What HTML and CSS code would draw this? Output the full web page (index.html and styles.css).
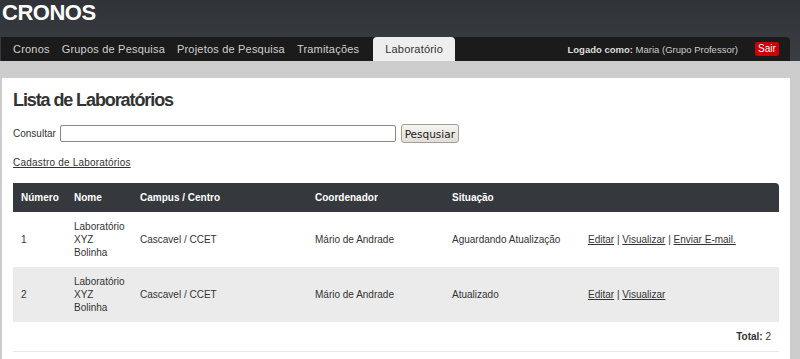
FILE: index.html
```html
<!DOCTYPE html>
<html lang="pt-BR">
<head>
    <meta charset="UTF-8">
    <meta name="viewport" content="width=device-width, initial-scale=1.0">
    <title>Cronos - Lista de Laboratórios</title>
    <link rel="stylesheet" href="styles.css">
</head>
<body>
    <div class="header">
        <h1 class="brand">CRONOS</h1>
        <div class="nav">
            <ul class="menu">
                <li><a href="#">Cronos</a></li>
                <li><a href="#">Grupos de Pesquisa</a></li>
                <li><a href="#">Projetos de Pesquisa</a></li>
                <li><a href="#">Tramitações</a></li>
                <li class="active"><a href="#">Laboratório</a></li>
            </ul>
            <div class="user">
                <span><b>Logado como:</b> Maria (Grupo Professor)</span>
                <a class="logout" href="#">Sair</a>
            </div>
        </div>
    </div>

    <div class="content">
        <h2 class="page-title">Lista de Laboratórios</h2>
        <form class="search">
            <label for="q">Consultar</label>
            <input type="text" id="q" class="search-input">
            <button type="button" class="search-button">Pesqusiar</button>
        </form>
        <a class="new-link" href="#">Cadastro de Laboratórios</a>

        <table class="grid">
            <colgroup>
                <col style="width: 53px">
                <col style="width: 66px">
                <col style="width: 175px">
                <col style="width: 137px">
                <col style="width: 136px">
                <col>
            </colgroup>
            <thead>
                <tr>
                    <th>Número</th>
                    <th>Nome</th>
                    <th>Campus / Centro</th>
                    <th>Coordenador</th>
                    <th>Situação</th>
                    <th></th>
                </tr>
            </thead>
            <tbody>
                <tr>
                    <td>1</td>
                    <td>Laboratório XYZ Bolinha</td>
                    <td>Cascavel / CCET</td>
                    <td>Mário de Andrade</td>
                    <td>Aguardando Atualização</td>
                    <td><a href="#">Editar</a> | <a href="#">Visualizar</a> | <a href="#">Enviar E-mail.</a></td>
                </tr>
                <tr class="alt">
                    <td>2</td>
                    <td>Laboratório XYZ Bolinha</td>
                    <td>Cascavel / CCET</td>
                    <td>Mário de Andrade</td>
                    <td>Atualizado</td>
                    <td><a href="#">Editar</a> | <a href="#">Visualizar</a></td>
                </tr>
            </tbody>
            <tfoot>
                <tr>
                    <td colspan="6" class="total"><b>Total:</b> 2</td>
                </tr>
            </tfoot>
        </table>
    </div>
</body>
</html>
```

FILE: styles.css
```css
body {
    font-family: 'Liberation Sans', Arial, sans-serif;
    font-size: 10px;
    color: #333;
    background-color: #cccccc;
    margin: 0;
    padding: 0;
}
.header {
    background: linear-gradient(#303338, #3a3d42);
    height: 61px;
}
.brand {
    margin: 0;
    padding: 0 0 12px 2px;
    font-size: 22px;
    line-height: 25px;
    letter-spacing: -0.5px;
    color: #fff;
}
.nav {
    margin-left: 1px;
    width: 789px;
    height: 24px;
    background-color: #1b1b1b;
    border-top-right-radius: 4px;
    display: flex;
    justify-content: space-between;
    align-items: stretch;
}
.menu {
    list-style: none;
    margin: 0;
    padding: 0 0 0 6px;
    display: flex;
}
.menu li {
    display: flex;
}
.menu a {
    display: flex;
    align-items: center;
    padding: 0 6px;
    font-size: 11px;
    letter-spacing: 0.2px;
    color: #d0d0d0;
    text-decoration: none;
}
.menu .active {
    margin-left: 8px;
}
.menu .active a {
    padding: 0 12px;
    background-color: #eeeeee;
    color: #333;
    border-radius: 4px 4px 0 0;
}
.user {
    display: flex;
    align-items: center;
    padding-right: 11px;
    font-size: 9.5px;
    color: #ccc;
}
.user b {
    color: #ddd;
}
.logout {
    margin-left: 17px;
    width: 24px;
    height: 14px;
    line-height: 14px;
    text-align: center;
    background-color: #cc0000;
    border-radius: 2px;
    color: #fff;
    font-size: 10px;
    text-decoration: none;
}
.content {
    margin: 17px 0 0 2px;
    width: 766px;
    padding: 11px 11px 20px 11px;
    background-color: #fff;
}
.page-title {
    margin: 0;
    font-size: 18px;
    line-height: 22px;
    letter-spacing: -1.1px;
    color: #333;
}
.search {
    margin: 13px 0 0 0;
    display: flex;
    align-items: center;
    height: 19px;
}
.search label {
    margin-right: 4px;
}
.search-input {
    box-sizing: border-box;
    width: 336px;
    height: 17px;
    margin: 0;
    padding: 0 3px;
    border: 1px solid #8c8780;
    border-radius: 2px;
}
.search-button {
    box-sizing: border-box;
    margin-left: 5px;
    height: 19px;
    width: 58px;
    padding: 0;
    font-family: 'DejaVu Sans', sans-serif;
    font-size: 10.5px;
    color: #222;
    background: linear-gradient(#f6f4f1, #e2ddd6);
    border: 1px solid #a29d96;
    border-radius: 3px;
}
.new-link {
    display: block;
    margin-top: 13px;
    line-height: 13px;
    letter-spacing: 0.2px;
    color: #333;
    width: max-content;
}
.grid {
    margin-top: 14px;
    width: 766px;
    border-collapse: collapse;
    table-layout: fixed;
}
.grid th {
    background-color: #35383d;
    color: #fff;
    font-weight: bold;
    text-align: left;
    padding: 8px 4px 8px 8px;
    line-height: 13px;
}
.grid th:last-child {
    border-top-right-radius: 4px;
}
.grid td {
    padding: 8px 4px 8px 8px;
    line-height: 13px;
    vertical-align: middle;
}
.grid tbody tr {
    height: 55px;
}
.grid tr.alt td {
    background-color: #ebebeb;
}
.grid td a {
    color: #333;
}
.grid .total {
    text-align: right;
    padding-right: 8px;
    border-bottom: 1px solid #e8e8e8;
}
```
